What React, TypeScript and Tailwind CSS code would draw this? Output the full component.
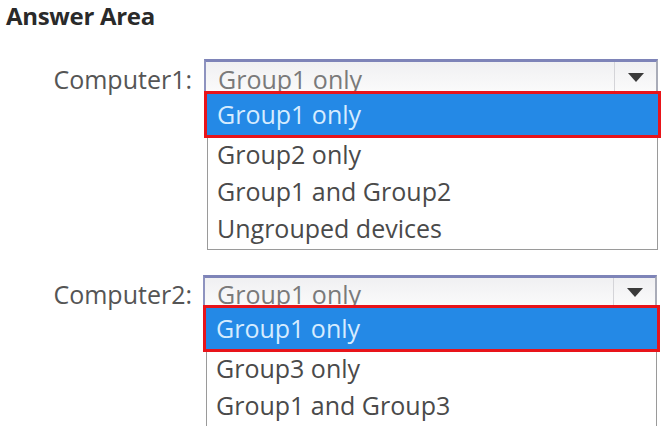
import React from "react";

const font = { fontFamily: '"Open Sans", "Noto Sans", sans-serif' };

function Arrow() {
  return (
    <svg width="16" height="9" viewBox="0 0 16 9">
      <polygon points="0,0 16,0 8,9" fill="#3a3a3a" />
    </svg>
  );
}

function Dropdown({
  selected,
  options,
  selectH,
}: {
  selected: string;
  options: string[];
  selectH: string;
}) {
  return (
    <div className="flex flex-col w-[457px]">
      <div
        className={`flex items-stretch w-[454px] ${selectH} border-t-[3px] border-l-[2px] border-r-[2px] border-t-[#7e84b8] border-l-[#8e93bf] border-r-[#a9acb8] bg-gradient-to-b from-[#f0f0f2] to-[#fbfbfb]`}
      >
        <div className="flex-1 flex items-center pl-[12px] text-[25px] text-[#7a7a7a] leading-none pt-[4px]">
          {selected}
        </div>
        <div className="w-[42px] border-l border-[#d4d4d8] flex items-center justify-center">
          <Arrow />
        </div>
      </div>
      <div className="-mt-[2px] h-[47px] border-[3px] border-[#e8141a] bg-[#2489e6] flex items-center pl-[10px] text-[25px] text-[#d6ecff] leading-none">
        {selected}
      </div>
      <div className="ml-[3px] w-[451px] border-l border-r border-b border-[#9a9a9a] bg-white">
        {options.map((o) => (
          <div
            key={o}
            className="h-[37px] flex items-center pl-[9px] pb-[4px] text-[25px] text-[#4a4a4a] leading-none"
          >
            {o}
          </div>
        ))}
      </div>
    </div>
  );
}

export default function App() {
  return (
    <div className="w-[662px] h-[426px] bg-white overflow-hidden" style={font}>
      <div className="pl-[6px] h-[32px] text-[24px] font-bold text-[#2a2a2a] leading-[32px] tracking-[-0.3px]">
        Answer Area
      </div>
      <div className="flex mt-[27px]">
        <div className="w-[192px] text-right text-[25px] text-[#555] leading-none pt-[8px]">
          Computer1:
        </div>
        <div className="ml-[12px]">
          <Dropdown
            selectH="h-[34px]"
            selected="Group1 only"
            options={["Group2 only", "Group1 and Group2", "Ungrouped devices"]}
          />
        </div>
      </div>
      <div className="flex mt-[25px]">
        <div className="w-[192px] text-right text-[25px] text-[#555] leading-none pt-[7px]">
          Computer2:
        </div>
        <div className="ml-[11px]">
          <Dropdown
            selectH="h-[32px]"
            selected="Group1 only"
            options={["Group3 only", "Group1 and Group3"]}
          />
        </div>
      </div>
    </div>
  );
}
